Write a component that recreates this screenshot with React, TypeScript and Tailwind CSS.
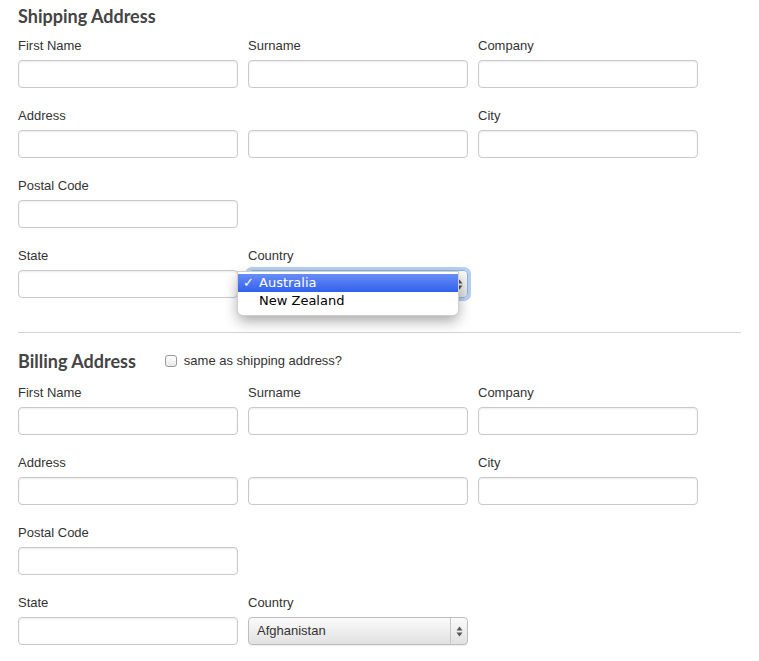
const inputCls =
  'block h-[28px] w-[220px] rounded-[4px] border border-[#c9c9c9] bg-white shadow-[inset_0_1px_2px_rgba(0,0,0,0.08)]';

const Field = ({ label, children }: { label?: string; children?: React.ReactNode }) => (
  <div className="mb-[18px]">
    <div className="mb-[6px] mt-[1px] h-[17px] text-[13px] leading-[18px] text-[#333]">{label ?? ''}</div>
    {children ?? <div className={inputCls} />}
  </div>
);

const Blank = () => <div />;

const SelectArrows = () => (
  <svg width="7" height="11" viewBox="0 0 7 11" className="text-[#555]">
    <path d="M3.5 0.5 L6.5 4.5 L0.5 4.5 Z" fill="currentColor" />
    <path d="M3.5 10.5 L6.5 6.5 L0.5 6.5 Z" fill="currentColor" />
  </svg>
);

const CountrySelect = ({ value }: { value: string }) => (
  <div className="flex h-[28px] w-[220px] items-center rounded-[4px] border border-[#bdbdbd] bg-gradient-to-b from-[#fbfbfb] to-[#e1e1e1] shadow-[0_1px_1px_rgba(0,0,0,0.08)]">
    <span className="flex-1 pl-[8px] text-[13px] text-[#333]">{value}</span>
    <span className="flex h-full w-[17px] items-center justify-center border-l border-[#c6c6c6]">
      <SelectArrows />
    </span>
  </div>
);

const OpenCountrySelect = () => (
  <div className="relative">
    <div className="flex h-[28px] w-[220px] items-center justify-end rounded-[4px] border border-[#8fb3e0] bg-gradient-to-b from-[#fbfbfb] to-[#e1e1e1] pr-[4px] shadow-[0_0_0_3px_rgba(120,170,230,0.55)]">
      <SelectArrows />
    </div>
    <div
      className="absolute left-[-10px] top-[2px] z-10 h-[43px] w-[220px] overflow-hidden rounded-b-[5px] bg-white pt-[2px] shadow-[0_6px_14px_rgba(0,0,0,0.35)] ring-1 ring-[#cfcfcf]"
      style={{ fontFamily: '"DejaVu Sans", "Noto Sans", sans-serif' }}
    >
      <div className="flex h-[18px] items-center bg-gradient-to-b from-[#6a8cf6] to-[#2f60ee] text-[13px] text-white">
        <span className="w-[21px] pl-[5px]">✓</span>
        <span>Australia</span>
      </div>
      <div className="flex h-[18px] items-center text-[13px] text-black">
        <span className="w-[21px]" />
        <span>New Zealand</span>
      </div>
    </div>
  </div>
);

const Heading = ({ children }: { children: React.ReactNode }) => (
  <h2
    className="h-[24px] text-[18px] font-bold leading-[24px] text-[#444]"
    style={{ fontFamily: 'Lato, "DejaVu Sans", sans-serif' }}
  >
    {children}
  </h2>
);

const AddressFields = ({ open, country }: { open?: boolean; country: string }) => (
  <div className="grid grid-cols-[220px_220px_220px] gap-x-[10px]">
    <Field label="First Name" />
    <Field label="Surname" />
    <Field label="Company" />
    <Field label="Address" />
    <Field label="" />
    <Field label="City" />
    <Field label="Postal Code" />
    <Blank />
    <Blank />
    <Field label="State" />
    <Field label="Country">{open ? <OpenCountrySelect /> : <CountrySelect value={country} />}</Field>
    <Blank />
  </div>
);

export default function App() {
  return (
    <div
      className="h-[661px] w-[759px] overflow-hidden bg-white px-[18px] pt-[4px]"
      style={{ fontFamily: '"Liberation Sans", Arial, sans-serif' }}
    >
      <div className="mb-[8px]">
        <Heading>Shipping Address</Heading>
      </div>
      <AddressFields open country="Australia" />

      <hr className="mt-[16px] border-0 border-t border-[#d4d4d4]" />

      <div className="mb-[10px] mt-[16px] flex items-center">
        <Heading>Billing Address</Heading>
        <label className="ml-[29px] flex items-center text-[13px] text-[#333]">
          <span className="mr-[7px] inline-block h-[12px] w-[12px] rounded-[3px] border border-[#9a9a9a] bg-gradient-to-b from-white to-[#e8e8e8]" />
          same as shipping address?
        </label>
      </div>
      <AddressFields country="Afghanistan" />
    </div>
  );
}
